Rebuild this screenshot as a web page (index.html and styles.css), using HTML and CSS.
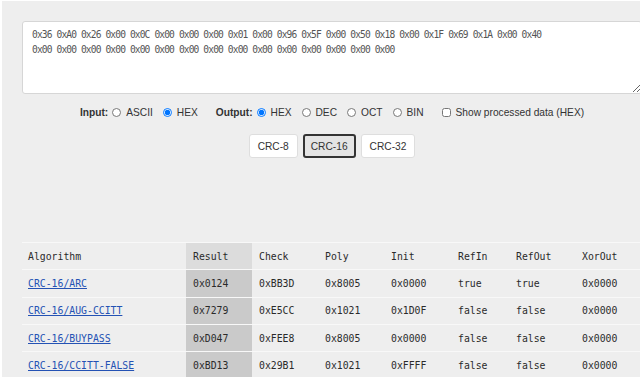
FILE: index.html
```html
<!DOCTYPE html>
<html>
<head>
    <link rel="stylesheet" href="styles.css">
</head>
<body>
    <div class="page">
        <div class="main">
            <!-- input data -->
            <textarea class="data-input" spellcheck="false">0x36 0xA0 0x26 0x00 0x0C 0x00 0x00 0x00 0x01 0x00 0x96 0x5F 0x00 0x50 0x18 0x00 0x1F 0x69 0x1A 0x00 0x40
0x00 0x00 0x00 0x00 0x00 0x00 0x00 0x00 0x00 0x00 0x00 0x00 0x00 0x00 0x00</textarea>

            <!-- options -->
            <div class="options">
                <div class="opt-group">
                    <span class="opt-title">Input:</span>
                    <label class="opt"><input type="radio" name="in">ASCII</label>
                    <label class="opt"><input type="radio" name="in" checked>HEX</label>
                </div>
                <div class="opt-group">
                    <span class="opt-title">Output:</span>
                    <label class="opt"><input type="radio" name="out" checked>HEX</label>
                    <label class="opt"><input type="radio" name="out">DEC</label>
                    <label class="opt"><input type="radio" name="out">OCT</label>
                    <label class="opt"><input type="radio" name="out">BIN</label>
                </div>
                <div class="opt-group">
                    <label class="opt"><input type="checkbox">Show processed data (HEX)</label>
                </div>
            </div>

            <div class="crc-tabs">
                <button class="crc-btn">CRC-8</button>
                <button class="crc-btn active">CRC-16</button>
                <button class="crc-btn">CRC-32</button>
            </div>
        </div>

        <!-- results -->
        <table class="result-table">
            <colgroup>
                <col style="width: 164px">
                <col style="width: 66px">
                <col style="width: 66px">
                <col style="width: 66px">
                <col style="width: 67px">
                <col style="width: 58px">
                <col style="width: 66px">
                <col>
            </colgroup>
            <thead>
                <tr>
                    <th>Algorithm</th>
                    <th class="result">Result</th>
                    <th>Check</th>
                    <th>Poly</th>
                    <th>Init</th>
                    <th>RefIn</th>
                    <th>RefOut</th>
                    <th>XorOut</th>
                </tr>
            </thead>
            <tbody>
                <tr>
                    <td><a href="#">CRC-16/ARC</a></td>
                    <td class="result">0x0124</td>
                    <td>0xBB3D</td>
                    <td>0x8005</td>
                    <td>0x0000</td>
                    <td>true</td>
                    <td>true</td>
                    <td>0x0000</td>
                </tr>
                <tr>
                    <td><a href="#">CRC-16/AUG-CCITT</a></td>
                    <td class="result">0x7279</td>
                    <td>0xE5CC</td>
                    <td>0x1021</td>
                    <td>0x1D0F</td>
                    <td>false</td>
                    <td>false</td>
                    <td>0x0000</td>
                </tr>
                <tr>
                    <td><a href="#">CRC-16/BUYPASS</a></td>
                    <td class="result">0xD047</td>
                    <td>0xFEE8</td>
                    <td>0x8005</td>
                    <td>0x0000</td>
                    <td>false</td>
                    <td>false</td>
                    <td>0x0000</td>
                </tr>
                <tr>
                    <td><a href="#">CRC-16/CCITT-FALSE</a></td>
                    <td class="result">0xBD13</td>
                    <td>0x29B1</td>
                    <td>0x1021</td>
                    <td>0xFFFF</td>
                    <td>false</td>
                    <td>false</td>
                    <td>0x0000</td>
                </tr>
            </tbody>
        </table>
    </div>
</body>
</html>
```

FILE: styles.css
```css
body {
    margin: 0;
    background: #fff;
    overflow: hidden;
    font-family: 'Liberation Sans', Arial, sans-serif;
}

.page {
    margin: 1px 0 0 2px;
    padding: 20px 0 0 20px;
    background: #eeeeee;
    min-height: 400px;
}

.main {
    width: 620px;
}

.data-input {
    display: block;
    box-sizing: border-box;
    width: 620px;
    height: 73px;
    margin: 0;
    padding: 5px 9px;
    border: 1px solid #d6d6d6;
    border-radius: 3px;
    background: #fff;
    color: #555;
    font-family: 'DejaVu Sans Mono', 'Liberation Mono', monospace;
    font-size: 9.6px;
    letter-spacing: -0.88px;
    line-height: 15px;
    outline: none;
}

.options {
    display: flex;
    justify-content: center;
    align-items: center;
    margin-top: 13px;
    font-size: 10.2px;
    color: #333;
}

.opt-group {
    display: flex;
    align-items: center;
    margin-left: 18px;
}

.opt-group:first-child {
    margin-left: 0;
}

.opt-title {
    font-weight: bold;
    margin-right: 4px;
}

.opt {
    display: flex;
    align-items: center;
    margin-right: 10px;
}

.opt:last-child {
    margin-right: 0;
}

.opt input {
    width: 9px;
    height: 9px;
    margin: 0 5px 0 0;
}

.crc-tabs {
    display: flex;
    justify-content: center;
    gap: 5px;
    margin-top: 16px;
}

.crc-btn {
    height: 24px;
    padding: 0 8px;
    border: 1px solid #dedede;
    border-radius: 3px;
    background: #fff;
    color: #333;
    font-family: 'Liberation Sans', Arial, sans-serif;
    font-size: 10.2px;
}

.crc-btn.active {
    padding: 0 6px;
    border: 2px solid #333;
    background: #e4e4e4;
}

.result-table {
    margin-top: 84px;
    width: 640px;
    table-layout: fixed;
    border-collapse: collapse;
    font-family: 'DejaVu Sans Mono', 'Liberation Mono', monospace;
    font-size: 9.8px;
    color: #2a2a2a;
}

.result-table th,
.result-table td {
    height: 26.3px;
    padding: 0 7px;
    border-top: 1px solid #f8f8f8;
    text-align: left;
    font-weight: normal;
    white-space: nowrap;
}

.result-table th:first-child,
.result-table td:first-child {
    padding-left: 6px;
}

.result-table th.result {
    background: #dcdcdc;
}

.result-table td.result {
    background: #cacaca;
}

.result-table a {
    color: #2452b4;
    text-decoration: underline;
}
```
